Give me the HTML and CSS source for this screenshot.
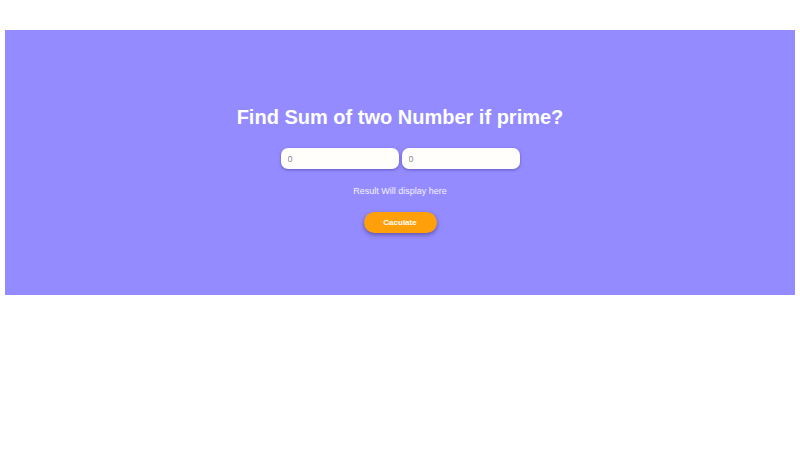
FILE: index.html
```
<!DOCTYPE html>
<html lang="en">
<head>
<meta charset="utf-8">
<title>Prime Sum</title>
<link rel="stylesheet" href="styles.css">
</head>
<body>
  <section class="panel">
    <h1 class="title">Find Sum of two Number if prime?</h1>
    <div class="inputs">
      <input class="num" type="text" placeholder="0">
      <input class="num" type="text" placeholder="0">
    </div>
    <p class="result">Result Will display here</p>
    <button class="calc">Caculate</button>
  </section>
</body>
</html>
```
FILE: styles.css
```
html, body {
  margin: 0;
  padding: 0;
  background: #ffffff;
  font-family: "Liberation Sans", Arial, sans-serif;
}

.panel {
  margin: 30px 5px 0;
  height: 265px;
  box-sizing: border-box;
  padding-top: 75px;
  background: #938bff;
  display: flex;
  flex-direction: column;
  align-items: center;
}

.title {
  margin: 0;
  color: #ffffff;
  font-size: 20px;
  line-height: 25px;
  font-weight: bold;
}

.inputs {
  margin-top: 18px;
  display: flex;
  gap: 3px;
}

.num {
  width: 118px;
  height: 21px;
  box-sizing: border-box;
  border: none;
  border-radius: 7px;
  padding: 0 7px;
  background: #fffefa;
  font-family: "Liberation Sans", Arial, sans-serif;
  font-size: 9px;
  color: #555;
  box-shadow: 0 1px 3px rgba(60, 50, 140, 0.55);
  outline: none;
}

.num::placeholder {
  color: #8a8a8a;
}

.result {
  margin: 15px 0 0;
  color: #f4f2ff;
  font-size: 9px;
  line-height: 14px;
}

.calc {
  margin-top: 14px;
  width: 73px;
  height: 21px;
  border: none;
  border-radius: 11px;
  background: #ffa00a;
  color: #ffffff;
  font-family: "Liberation Sans", Arial, sans-serif;
  font-size: 8px;
  font-weight: bold;
  box-shadow: 0 2px 4px rgba(60, 40, 100, 0.55);
  cursor: pointer;
}
```
